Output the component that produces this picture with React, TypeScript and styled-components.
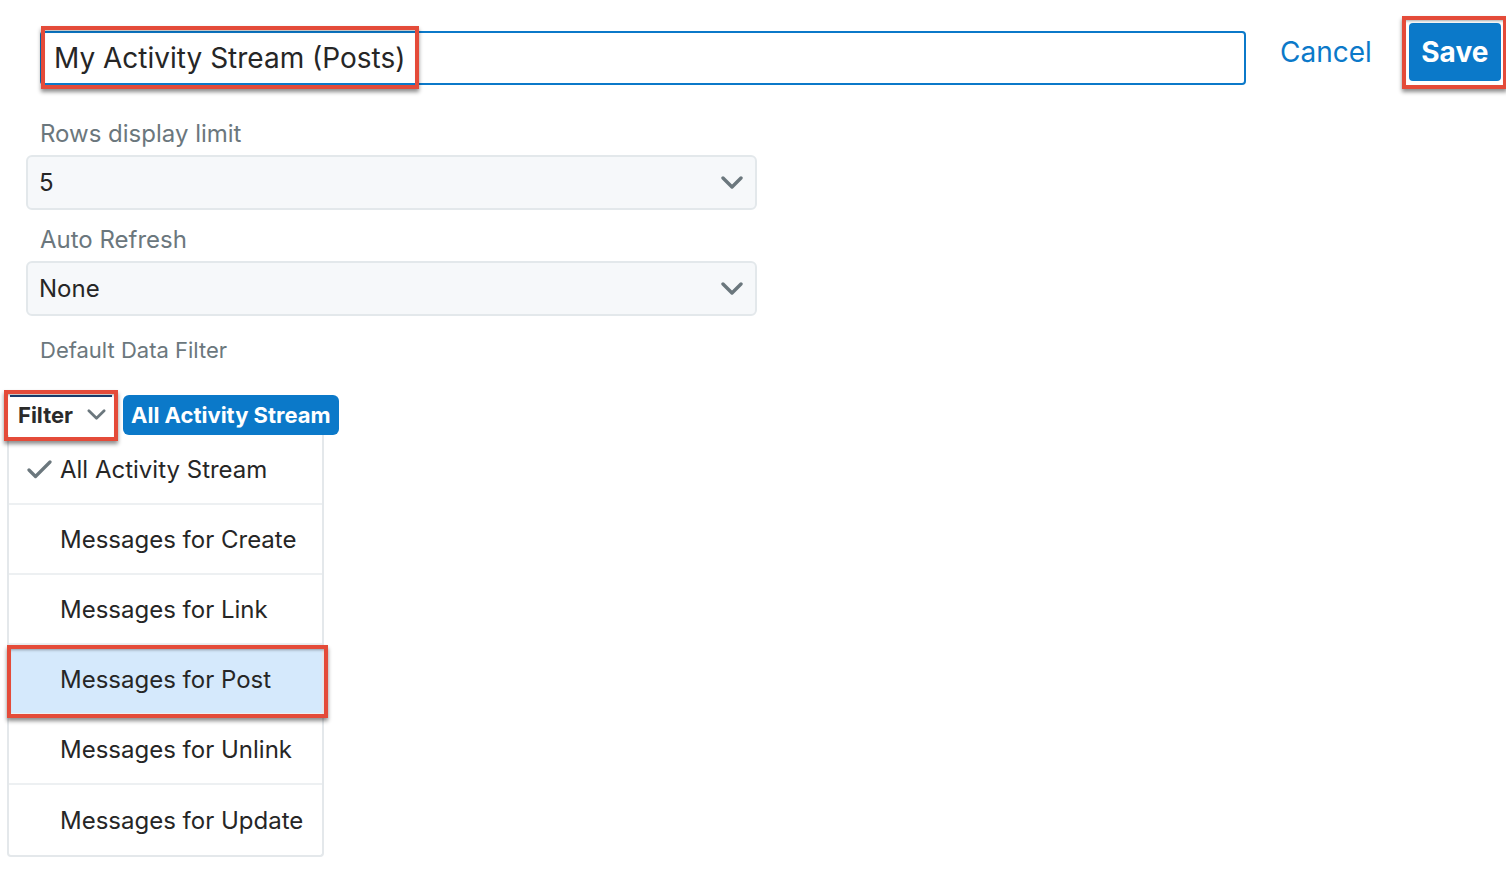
import React from "react";
import styled, { createGlobalStyle } from "styled-components";

const Global = createGlobalStyle`
  html, body { margin: 0; padding: 0; background: #fff; }
  body { font-family: Inter, "Noto Sans", "Liberation Sans", sans-serif; overflow: hidden; }
  * { box-sizing: border-box; }
`;

const Page = styled.div`
  width: 1506px;
  height: 872px;
  position: relative;
`;

const Header = styled.div`
  display: flex;
  align-items: flex-start;
  height: 100px;
`;

const Annotated = styled.div`
  position: relative;
`;

const Mark = styled.div<{ $l: number; $t: number; $w: number; $h: number }>`
  position: absolute;
  left: ${(p) => p.$l}px;
  top: ${(p) => p.$t}px;
  width: ${(p) => p.$w}px;
  height: ${(p) => p.$h}px;
  border: 4px solid #e44b39;
  box-shadow: 0 3px 4px rgba(0, 0, 0, 0.45), inset 0 3px 3px -2px rgba(0, 0, 0, 0.35);
  pointer-events: none;
  z-index: 5;
`;

const TitleInput = styled.div`
  margin: 31px 0 0 40px;
  width: 1206px;
  height: 54px;
  border: 2px solid #0b79c9;
  border-radius: 4px;
  display: flex;
  align-items: center;
  padding-left: 12px;
  font-size: 28px;
  color: #262626;
`;

const Cancel = styled.div`
  margin: 35px 0 0 34px;
  font-size: 28px;
  line-height: 34px;
  color: #0b79c9;
`;

const SaveButton = styled.div`
  margin: 23px 0 0 37px;
  width: 92px;
  height: 58px;
  background: #0b79c9;
  border-radius: 4px;
  color: #fff;
  font-weight: 700;
  font-size: 28px;
  display: flex;
  align-items: center;
  justify-content: center;
`;

const Form = styled.div`
  padding-left: 26px;
  width: 757px;
  display: flex;
  flex-direction: column;
`;

const Label = styled.div<{ $top: number; $size: number }>`
  margin-top: ${(p) => p.$top}px;
  padding-left: 14px;
  font-size: ${(p) => p.$size}px;
  line-height: 30px;
  color: #6b777d;
`;

const Select = styled.div`
  margin-top: 6px;
  height: 55px;
  background: #f6f8fa;
  border: 2px solid #e3e8eb;
  border-radius: 6px;
  display: flex;
  align-items: center;
  justify-content: space-between;
  padding: 0 12px 0 11px;
  font-size: 24px;
  color: #262626;
`;

const FilterRow = styled.div`
  margin-top: 30px;
  padding-left: 10px;
  display: flex;
  align-items: stretch;
  height: 40px;
`;

const FilterButton = styled.div`
  width: 102px;
  border-top: 2px solid #1b3f73;
  display: flex;
  align-items: center;
  gap: 14px;
  padding-left: 8px;
  padding-bottom: 3px;
  font-size: 22px;
  font-weight: 700;
  color: #2a2a2a;
`;

const Pill = styled.div`
  margin-left: 11px;
  background: #0b79c9;
  border-radius: 6px;
  color: #fff;
  font-weight: 700;
  font-size: 22px;
  display: flex;
  align-items: center;
  padding: 0 8px;
`;

const Menu = styled.div`
  margin-left: 7px;
  width: 317px;
  border: 2px solid #e4e8eb;
  border-top: none;
  border-radius: 0 0 4px 4px;
  background: #fff;
  display: flex;
  flex-direction: column;
`;

const Item = styled.div<{ $active?: boolean; $last?: boolean }>`
  height: 70px;
  display: flex;
  align-items: center;
  padding-left: 18px;
  gap: 7px;
  font-size: 24px;
  color: #262626;
  background: ${(p) => (p.$active ? "#d5e9fc" : "transparent")};
  border-bottom: ${(p) => (p.$last ? "none" : "2px solid #edf0f2")};
`;

const CheckSlot = styled.span`
  width: 26px;
  display: inline-flex;
  align-items: center;
`;

const Chevron = ({ w, h, sw }: { w: number; h: number; sw: number }) => (
  <svg width={w} height={h} viewBox="0 0 22 13" fill="none">
    <polyline
      points="2,2 11,11 20,2"
      stroke="#6b777d"
      strokeWidth={sw}
      strokeLinecap="round"
      strokeLinejoin="round"
    />
  </svg>
);

const Check = () => (
  <svg width="25" height="19" viewBox="0 0 25 19" fill="none">
    <polyline
      points="2,10 8.5,16.5 23,2"
      stroke="#6b777d"
      strokeWidth="3.2"
      strokeLinecap="round"
      strokeLinejoin="round"
    />
  </svg>
);

const items = [
  "All Activity Stream",
  "Messages for Create",
  "Messages for Link",
  "Messages for Post",
  "Messages for Unlink",
  "Messages for Update",
];

export default function App() {
  return (
    <Page>
      <Global />
      <Header>
        <Annotated>
          <TitleInput>My Activity Stream (Posts)</TitleInput>
          <Mark $l={41} $t={26} $w={378} $h={63} />
        </Annotated>
        <Cancel>Cancel</Cancel>
        <Annotated>
          <SaveButton>Save</SaveButton>
          <Mark $l={30} $t={16} $w={105} $h={73} />
        </Annotated>
      </Header>
      <Form>
        <Label $top={19} $size={24}>Rows display limit</Label>
        <Select>
          <span>5</span>
          <Chevron w={22} h={13} sw={3.4} />
        </Select>
        <Label $top={15} $size={24}>Auto Refresh</Label>
        <Select>
          <span>None</span>
          <Chevron w={22} h={13} sw={3.4} />
        </Select>
        <Label $top={19} $size={22}>Default Data Filter</Label>
      </Form>
      <Annotated>
        <FilterRow>
          <FilterButton>
            <span>Filter</span>
            <Chevron w={19} h={11} sw={3.2} />
          </FilterButton>
          <Pill>All Activity Stream</Pill>
        </FilterRow>
        <Mark $l={4} $t={-5} $w={114} $h={51} />
      </Annotated>
      <Annotated>
        <Menu>
          {items.map((t, i) => (
            <Item key={t} $active={i === 3} $last={i === items.length - 1}>
              <CheckSlot>{i === 0 ? <Check /> : null}</CheckSlot>
              <span>{t}</span>
            </Item>
          ))}
        </Menu>
        <Mark $l={7} $t={210} $w={321} $h={73} />
      </Annotated>
    </Page>
  );
}
